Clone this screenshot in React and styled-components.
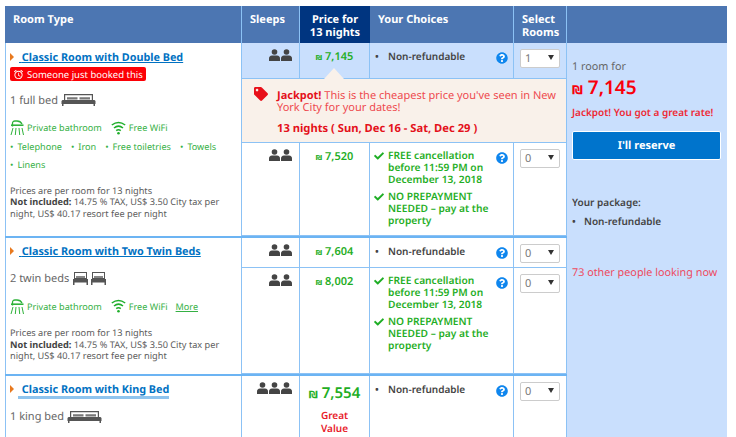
import React from "react";
import styled, { createGlobalStyle } from "styled-components";
import { FaCheck, FaQuestionCircle, FaTag } from "react-icons/fa";
import { MdAccessAlarm } from "react-icons/md";

const font = `"Noto Sans", "Open Sans", "Liberation Sans", sans-serif`;

const rooms = [
  {
    name: "Classic Room with Double Bed",
    booked: true,
    beds: "1 full bed",
    bedIcon: "full",
    extras: ["Telephone", "Iron", "Free toiletries", "Towels", "Linens"],
    rows: "36px 64px 93px",
    options: [
      { sleeps: 2, price: "7,145", selected: true, qty: 1 },
      { banner: true },
      { sleeps: 2, price: "7,520", free: true, qty: 0 },
    ],
  },
  {
    name: "Classic Room with Two Twin Beds",
    beds: "2 twin beds",
    bedIcon: "twin",
    more: true,
    rows: "30px 106px",
    options: [
      { sleeps: 2, price: "7,604", qty: 0 },
      { sleeps: 2, price: "8,002", free: true, qty: 0 },
    ],
  },
  {
    name: "Classic Room with King Bed",
    beds: "1 king bed",
    bedIcon: "king",
    highlight: true,
    rows: "90px",
    options: [{ sleeps: 3, price: "7,554", big: true, qty: 0 }],
  },
];

function Bed({ kind }) {
  if (kind === "twin") {
    return (
      <svg width="35" height="13" viewBox="0 0 35 13" fill="#555">
        <path d="M2 0h13v7H2zM3 1v5h11V1z" fillRule="evenodd" />
        <path d="M4 4h9v2H4z" fill="#888" />
        <path d="M1 7h15v3.500H1zM1 10.500h1.500V13H1zM14.500 10.500H16V13h-1.500z" />
        <path d="M20 0h13v7H20zM21 1v5h11V1z" fillRule="evenodd" />
        <path d="M22 4h9v2h-9z" fill="#888" />
        <path d="M19 7h15v3.500H19zM19 10.500h1.500V13H19zM32.500 10.500H34V13h-1.500z" />
      </svg>
    );
  }
  return (
    <svg width="35" height="12" viewBox="0 0 35 12" fill="#555">
      <path d="M3 0h29v1.200H3zM3 0h1.200v6H3zM30.800 0H32v6h-1.200z" />
      <path d="M6 3.200h10.500v2.300H6zM18.500 3.200H29v2.300H18.500z" fill="#777" />
      <path d="M1.500 6H33.500l1 1v3H.5V7z" />
      <path d="M1 10h1.500v2H1zM32.500 10H34v2h-1.500z" />
    </svg>
  );
}

function Shower() {
  return (
    <svg width="14" height="15" viewBox="0 0 14 15" fill="none" stroke="#2eb23a">
      <path d="M2.500 6.500V3.500Q2.500 1 5 1h2Q10.500 1 12 4" strokeWidth="1.300" />
      <path d="M1 5.200h12.500" strokeWidth="1.600" />
      <path d="M3 8l-2 7M6 8l-.7 7M9 8l.7 7M12 8l1.500 7" strokeWidth="1" />
    </svg>
  );
}

function Wifi() {
  return (
    <svg width="15" height="14" viewBox="0 0 15 14" fill="none" stroke="#1fae2a" strokeWidth="1.500">
      <path d="M.8 4Q7.500-1 14.200 4" />
      <path d="M3 7Q7.500 3.200 12 7" />
      <path d="M5.200 9.600Q7.500 7.800 9.800 9.600" />
      <circle cx="7.500" cy="12.300" r="1.300" fill="#1fae2a" stroke="none" />
    </svg>
  );
}

function Person() {
  return (
    <svg width="11" height="12" viewBox="0 0 11 12" fill="#444">
      <circle cx="5.500" cy="3" r="2.800" />
      <path d="M0 12V9.500Q0 6.800 3 6.500h5Q11 6.800 11 9.500V12z" />
    </svg>
  );
}

function Option({ option }) {
  return (
    <>
      <SleepCell $selected={option.selected}>
        <People>
          {Array.from({ length: option.sleeps }).map((_, i) => (
            <Person key={i} />
          ))}
        </People>
      </SleepCell>
      <PriceCell $selected={option.selected}>
        <Price $big={option.big}>
          <Shekel $big={option.big}>₪</Shekel>
          {option.price}
        </Price>
        {option.big && <GreatValue>Great Value</GreatValue>}
      </PriceCell>
      <ChoiceCell $selected={option.selected}>
        {option.free ? (
          <div>
            <Perk>
              <FaCheck size={10} />
              <span>FREE cancellation before 11:59 PM on December 13, 2018</span>
            </Perk>
            <Perk>
              <FaCheck size={10} />
              <span>NO PREPAYMENT NEEDED – pay at the property</span>
            </Perk>
          </div>
        ) : (
          <Bullet>Non-refundable</Bullet>
        )}
        <Help>
          <FaQuestionCircle size={12} />
        </Help>
      </ChoiceCell>
      <SelectCell $selected={option.selected}>
        <Quantity>
          {option.qty}
          <Arrow />
        </Quantity>
      </SelectCell>
    </>
  );
}

function Room({ room }) {
  return (
    <RoomGroup $rows={room.rows}>
      <RoomCell $span={room.options.length}>
        <RoomName $booked={room.booked}>
          <Caret />
          <RoomLink $highlight={room.highlight}>&nbsp;{room.name}</RoomLink>
        </RoomName>
        {room.booked && (
          <Booked>
            <MdAccessAlarm size={11} />
            Someone just booked this
          </Booked>
        )}
        <BedLine $booked={room.booked}>
          {room.beds} <Bed kind={room.bedIcon} />
        </BedLine>
        <Amenities>
          <Amenity>
            <Shower /> Private bathroom
          </Amenity>
          <Amenity>
            <Wifi /> Free WiFi
          </Amenity>
          {room.more && <More>More</More>}
        </Amenities>
        {room.extras && (
          <Extras>
            {room.extras.map((extra) => (
              <Extra key={extra}>{extra}</Extra>
            ))}
          </Extras>
        )}
        <Notes>
          Prices are per room for 13 nights
          <br />
          <b>Not included:</b> 14.75 % TAX, US$ 3.50 City tax per night, US$ 40.17 resort fee per night
        </Notes>
      </RoomCell>
      {room.options.map((option, i) =>
        option.banner ? (
          <Banner key={i}>
            <FaTag size={14} />
            <div>
              <BannerText>
                <b>Jackpot!</b> This is the cheapest price you've seen in New York City for your dates!
              </BannerText>
              <BannerDates>13 nights ( Sun, Dec 16 - Sat, Dec 29 )</BannerDates>
            </div>
          </Banner>
        ) : (
          <Option key={i} option={option} />
        )
      )}
    </RoomGroup>
  );
}

export default function App() {
  return (
    <>
      <GlobalStyle />
      <Page>
        <Table>
          <Main>
            <HeadRow>
              <HeadCell>Room Type</HeadCell>
              <HeadCell>Sleeps</HeadCell>
              <PriceHead>Price for 13 nights</PriceHead>
              <HeadCell>Your Choices</HeadCell>
              <HeadCell>Select Rooms</HeadCell>
            </HeadRow>
            {rooms.map((room) => (
              <Room key={room.name} room={room} />
            ))}
          </Main>
          <Side>
            <SideHead />
            <SideBody>
              <RoomFor>1 room for</RoomFor>
              <SideTotal>
                <SideShekel>₪</SideShekel> 7,145
              </SideTotal>
              <SideRate>Jackpot! You got a great rate!</SideRate>
              <Reserve>I'll reserve</Reserve>
              <PackageTitle>Your package:</PackageTitle>
              <PackageItem>Non-refundable</PackageItem>
              <Looking>73 other people looking now</Looking>
            </SideBody>
          </Side>
        </Table>
      </Page>
    </>
  );
}

const GlobalStyle = createGlobalStyle`
  html, body {
    margin: 0;
    height: 437px;
    overflow: hidden;
    background: #fff;
  }
  body {
    font-family: ${font};
    font-size: 10px;
    color: #555;
    text-rendering: geometricPrecision;
  }
`;

const Page = styled.div`
  padding: 6px 9px 0 5px;
  height: 431px;
  overflow: hidden;
`;

const Table = styled.div`
  display: flex;
  width: 722px;
`;

const Main = styled.div`
  width: 562px;
  flex: none;
`;

const HeadRow = styled.div`
  display: grid;
  grid-template-columns: 237px 58px 70px 144px 53px;
  height: 37px;
  background: #4c76b2;
  font-weight: 700;
  font-size: 11px;
  line-height: 13px;
  color: #fff;
`;

const HeadCell = styled.div`
  padding: 7px 8px 0 8px;
  border-right: 1px solid #8cc2f5;
`;

const PriceHead = styled.div`
  position: relative;
  background: #003580;
  text-align: center;
  padding: 7px 8px 0;
  &::after {
    content: "";
    position: absolute;
    left: 27px;
    bottom: -1px;
    width: 16px;
    height: 1px;
    background: #003580;
  }
`;

const RoomGroup = styled.div`
  display: grid;
  grid-template-columns: 237px 58px 70px 144px 53px;
  grid-template-rows: ${(p) => p.$rows};
  border-bottom: 2px solid #6cb4f3;
  &:last-child { border-bottom: 0; }
`;

const RoomCell = styled.div`
  grid-row: span ${(p) => p.$span};
  border-left: 1px solid #8cc2f5;
  border-right: 1px solid #8cc2f5;
  padding: 6px 4px 0 4px;
  min-width: 0;
`;

const RoomName = styled.div`
  display: flex;
  align-items: center;
  height: 14px;
  margin-top: ${(p) => (p.$booked ? "1px" : "0")};
  font-size: 10.800px;
  font-weight: 700;
`;

const Caret = styled.span`
  width: 0;
  height: 0;
  margin-right: 4px;
  border-left: 4px solid #e8791e;
  border-top: 4px solid transparent;
  border-bottom: 4px solid transparent;
`;

const RoomLink = styled.a`
  padding-left: 1px;
  color: #0071c2;
  line-height: 13px;
  text-decoration: ${(p) => (p.$highlight ? "none" : "underline")};
  border-bottom: ${(p) => (p.$highlight ? "3px solid #8fc4ee" : "0")};
  margin-bottom: ${(p) => (p.$highlight ? "-3px" : "0")};
`;

const Booked = styled.div`
  display: inline-flex;
  align-items: center;
  gap: 3px;
  margin-top: 3px;
  height: 14px;
  padding: 0 3px;
  border-radius: 2px;
  background: #fc0006;
  color: #fff;
  font-size: 9.500px;
`;

const BedLine = styled.div`
  display: flex;
  align-items: center;
  gap: 3px;
  margin-top: ${(p) => (p.$booked ? "10px" : "13px")};
  margin-bottom: 12px;
  font-size: 11px;
  line-height: 15px;
  color: #666;
`;

const Amenities = styled.div`
  display: flex;
  align-items: center;
  gap: 9px;
  font-size: 9.100px;
  color: #35b044;
  height: 16px;
`;

const Amenity = styled.span`
  display: inline-flex;
  align-items: center;
  gap: 3px;
`;

const More = styled.span`
  text-decoration: underline;
  margin-left: -1px;
`;

const Extras = styled.div`
  display: flex;
  flex-wrap: wrap;
  column-gap: 9px;
  margin: 2px 0 -2px;
  font-size: 9.100px;
  line-height: 18px;
  color: #35b044;
`;

const Extra = styled.span`
  &::before {
    content: "•";
    margin-right: 4px;
  }
`;

const Notes = styled.div`
  margin-top: 13px;
  font-size: 9.200px;
  line-height: 11.500px;
  color: #5c5c5c;
  b { color: #444; }
`;

const bodyCell = `
  border-right: 1px solid #8cc2f5;
  border-bottom: 1px solid #8cc2f5;
`;

const selectedBg = (p) => (p.$selected ? "#c9dffd" : "#fff");

const SleepCell = styled.div`
  ${bodyCell}
  background: ${selectedBg};
  padding: 6px 7px 0 0;
  display: flex;
  justify-content: flex-end;
  align-items: flex-start;
`;

const People = styled.div`
  display: flex;
  gap: 1px;
`;

const PriceCell = styled.div`
  ${bodyCell}
  position: relative;
  background: ${selectedBg};
  text-align: center;
  padding-top: 7px;
`;

const Price = styled.div`
  font-weight: 600;
  color: #1fae25;
  font-size: ${(p) => (p.$big ? "15px" : "11px")};
  line-height: ${(p) => (p.$big ? "20px" : "14px")};
  white-space: nowrap;
`;

const Shekel = styled.span`
  font-family: "DejaVu Sans", sans-serif;
  font-size: ${(p) => (p.$big ? "10px" : "7px")};
  margin-right: ${(p) => (p.$big ? "4px" : "3px")};
`;

const GreatValue = styled.div`
  margin: 3px auto 0;
  width: 40px;
  font-size: 10px;
  font-weight: 600;
  line-height: 13px;
  color: #e8202a;
`;

const ChoiceCell = styled.div`
  ${bodyCell}
  position: relative;
  background: ${selectedBg};
  padding: 6px 18px 0 4px;
  font-size: 10.200px;
  font-weight: 600;
  line-height: 12px;
`;

const Bullet = styled.div`
  color: #444;
  padding: 1px 0 0 14px;
  position: relative;
  font-size: 10px;
  &::before {
    content: "•";
    position: absolute;
    left: 1px;
  }
`;

const Perk = styled.div`
  display: flex;
  gap: 4px;
  color: #1fae25;
  margin-bottom: 5px;
  svg { flex: none; margin-top: 2px; }
`;

const Help = styled.span`
  position: absolute;
  top: 9px;
  right: 5px;
  color: #0f86ee;
  line-height: 0;
  background: #fff;
  border-radius: 50%;
`;

const SelectCell = styled.div`
  ${bodyCell}
  background: ${selectedBg};
  padding: 6px 6px 0 6px;
`;

const Quantity = styled.div`
  position: relative;
  box-sizing: border-box;
  width: 40px;
  height: 19px;
  padding-left: 4px;
  background: #fff;
  border: 1px solid #ccc;
  border-radius: 2px;
  font-size: 11px;
  line-height: 18px;
  color: #777;
`;

const Arrow = styled.span`
  position: absolute;
  right: 5px;
  top: 5px;
  border-top: 5px solid #333;
  border-left: 3px solid transparent;
  border-right: 3px solid transparent;
`;

const Banner = styled.div`
  grid-column: 2 / 6;
  position: relative;
  display: flex;
  gap: 9px;
  box-sizing: border-box;
  padding: 11px 8px 0 12px;
  background: #f9f1ea;
  border-bottom: 1px solid #8cc2f5;
  border-right: 1px solid #8cc2f5;
  > svg { color: #e8101a; flex: none; margin-top: -3px; }
  &::before {
    content: "";
    position: absolute;
    left: 82px;
    top: -11px;
    border-bottom: 11px solid #f9f1ea;
    border-left: 10px solid transparent;
    border-right: 10px solid transparent;
  }
`;

const BannerText = styled.div`
  font-size: 11px;
  line-height: 11.500px;
  color: #ee4a4e;
  b { color: #e4111b; }
`;

const BannerDates = styled.div`
  margin-top: 10px;
  font-size: 11.200px;
  font-weight: 700;
  line-height: 12px;
  color: #e4111b;
`;

const Side = styled.div`
  flex: 1;
  min-width: 0;
`;

const SideHead = styled.div`
  height: 37px;
  background: #4c76b2;
`;

const SideBody = styled.div`
  background: #c9dffd;
  height: 394px;
  padding: 17px 5px 0 5px;
`;

const RoomFor = styled.div`
  font-size: 10.800px;
  line-height: 14px;
  color: #666;
`;

const SideTotal = styled.div`
  font-size: 19px;
  font-weight: 600;
  line-height: 23px;
  margin-top: 2px;
  color: #f9000b;
`;

const SideShekel = styled.span`
  font-family: "DejaVu Sans", sans-serif;
  font-size: 12px;
`;

const SideRate = styled.div`
  margin-top: 4px;
  font-size: 10px;
  font-weight: 600;
  line-height: 12px;
  color: #ee2a35;
`;

const Reserve = styled.div`
  box-sizing: border-box;
  margin-top: 13px;
  width: 149px;
  height: 29px;
  border: 1px solid #fff;
  border-radius: 2px;
  background: #0074cc;
  color: #fff;
  font-size: 11px;
  font-weight: 700;
  line-height: 27px;
  text-align: center;
`;

const PackageTitle = styled.div`
  margin-top: 36px;
  font-size: 10px;
  font-weight: 600;
  line-height: 13px;
  color: #444;
`;

const PackageItem = styled.div`
  position: relative;
  margin-top: 6px;
  padding-left: 12px;
  font-size: 10px;
  font-weight: 600;
  line-height: 13px;
  color: #444;
  &::before {
    content: "•";
    position: absolute;
    left: 0;
  }
`;

const Looking = styled.div`
  margin-top: 38px;
  font-size: 10.800px;
  line-height: 14px;
  color: #ee4a60;
`;
